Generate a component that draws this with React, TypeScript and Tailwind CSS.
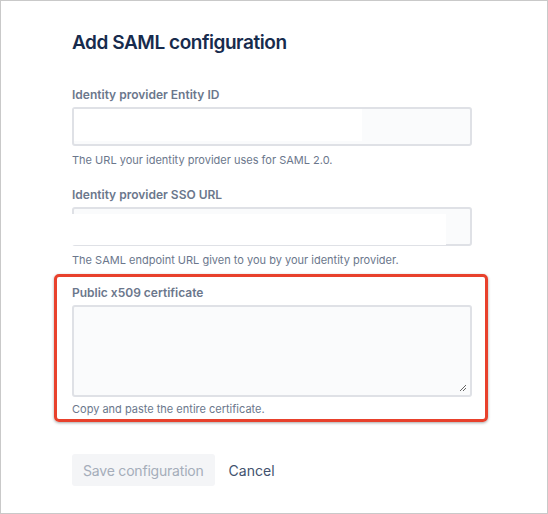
export default function App() {
  return (
    <div className="h-[514px] w-[548px] border border-[#c9c9c9] bg-white font-['Inter','Liberation_Sans',sans-serif]">
      <div className="ml-[71px] w-[400px] pt-[31px]">
        <h1 className="text-[19px] font-semibold leading-[22px] tracking-[-0.45px] text-[#172B4D]">Add SAML configuration</h1>

        <div className="mt-[33px]">
          <label className="block text-[12px] font-semibold leading-[16px] text-[#6B778C]">Identity provider Entity ID</label>
          <div className="relative mt-[4px] h-[39px] rounded-[3px] border-2 border-[#DFE1E6] bg-[#FAFBFC]">
            <div className="absolute left-0 top-0 h-[32px] w-[288px] bg-white" />
          </div>
          <p className="mt-[7px] text-[11px] leading-[14px] text-[#6B778C]">The URL your identity provider uses for SAML 2.0.</p>
        </div>

        <div className="mt-[20px]">
          <label className="block text-[12px] font-semibold leading-[16px] text-[#6B778C]">Identity provider SSO URL</label>
          <div className="relative mt-[4px] h-[39px] rounded-[3px] border-2 border-[#DFE1E6] bg-[#FAFBFC]">
            <div className="absolute -left-[2px] top-[5px] h-[31px] w-[374px] bg-white" />
          </div>
          <p className="mt-[7px] text-[11px] leading-[14px] text-[#6B778C]">The SAML endpoint URL given to you by your identity provider.</p>
        </div>
      </div>

      <div className="ml-[53px] mt-[7px] w-[434px] rounded-[5px] border-[3px] border-[#E8412C] pb-[3px] pl-[15px] pr-[13px] pt-[8px] shadow-[0_1px_3px_rgba(0,0,0,0.35)]">
        <label className="block text-[12px] font-semibold leading-[16px] text-[#6B778C]">Public x509 certificate</label>
        <div className="relative mt-[4px] h-[92px] rounded-[3px] border-2 border-[#DFE1E6] bg-[#FAFBFC]">
          <svg className="absolute bottom-[3px] right-[3px]" width="8" height="8" viewBox="0 0 8 8">
            <path d="M1 7 L7 1 M4 7 L7 4" stroke="#555" strokeWidth="0.9" />
          </svg>
        </div>
        <p className="mt-[5px] text-[11px] leading-[14px] text-[#6B778C]">Copy and paste the entire certificate.</p>
      </div>

      <div className="ml-[71px] mt-[32px] flex items-center gap-[14px]">
        <button className="h-[32px] rounded-[3px] bg-[#F4F5F7] px-[11px] text-[14px] tracking-[-0.2px] text-[#A5ADBA]">Save configuration</button>
        <button className="text-[14px] text-[#42526E]">Cancel</button>
      </div>
    </div>
  );
}
